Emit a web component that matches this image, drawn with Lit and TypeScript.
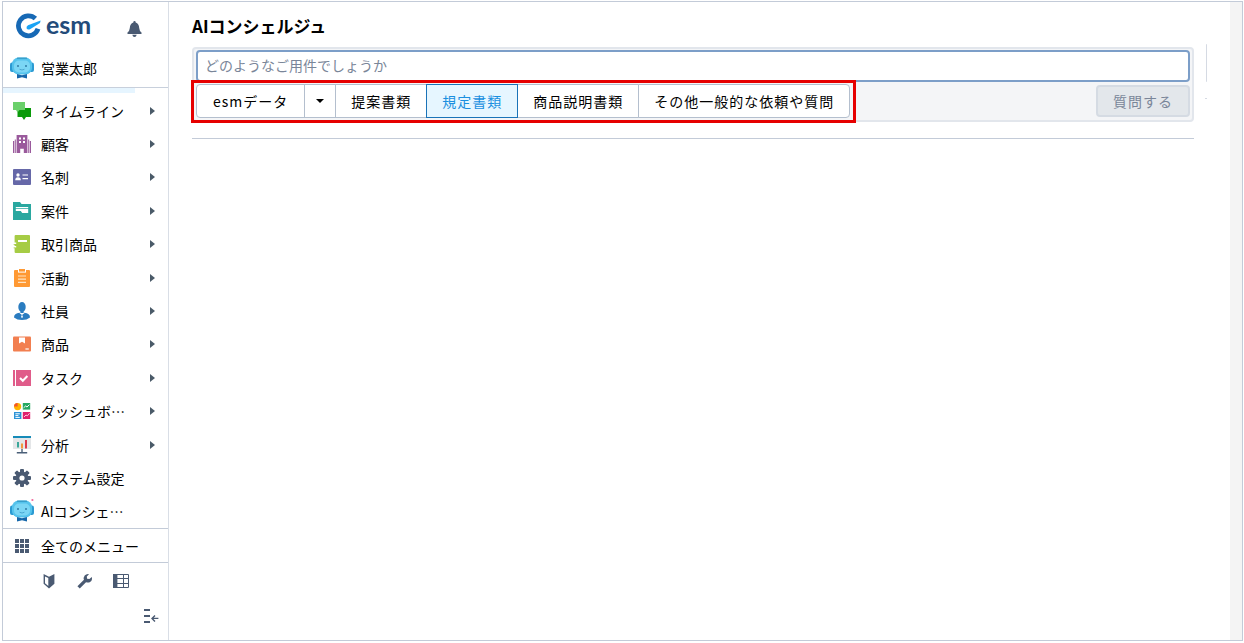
import { LitElement, html, css, svg, TemplateResult } from "lit";
import { customElement, state } from "lit/decorators.js";
import { classMap } from "lit/directives/class-map.js";

const robot = (spark: boolean) => html`
  <svg class="robot" viewBox="0 0 24 24" aria-hidden="true">
    <rect x="0" y="6.500" width="5" height="9.500" rx="2" fill="#2b9ad2" />
    <rect x="19" y="6.500" width="5" height="9.500" rx="2" fill="#2b9ad2" />
    <rect x="2" y="1.500" width="20" height="17" rx="6.500" fill="#55c3ec" />
    <path d="M7 2.200h10" stroke="#3397c4" stroke-width="1.200" />
    <rect x="4" y="4.500" width="16" height="12" rx="5" fill="#7bd6f5" />
    <circle cx="8" cy="10" r="1" fill="#2f7ba6" />
    <circle cx="16" cy="10" r="1" fill="#2f7ba6" />
    <path d="M9.500 13.200q2.500 1.600 5 0" fill="none" stroke="#3f9cc8" stroke-width=".8" />
    <path d="M7 18l5 1.300 5-1.300v4.600l-5-1.300-5 1.300z" fill="#1567ab" />
    ${spark ? svg`<circle cx="22.400" cy="1" r="1.100" fill="#f0679a" />` : ""}
  </svg>`;

const icon = (body: TemplateResult) =>
  html`<svg class="icon" viewBox="0 0 18 18" aria-hidden="true">${body}</svg>`;

const ITEMS: { label: string; art: TemplateResult; more: boolean }[] = [
  {
    label: "タイムライン",
    more: true,
    art: icon(svg`
      <path d="M4.500 6H18v9h-5l-2 3-2-3H4.500z" fill="#0a9a0a" />
      <path d="M0 0h12v8H6.500l-2 2.500-1.500-2.500H0z" fill="#6bd06b" />`),
  },
  {
    label: "顧客",
    more: true,
    art: icon(svg`
      <path d="M3.600 0h10.800v18h-3.600v-4.200H7.200V18H3.600z" fill="#9a5a9c" />
      <path d="M0 6h1.200v12H0zM1.800 4.600h1V18h-1zM15.200 4.600h1V18h-1zM16.800 6H18v12h-1.200z" fill="#9a5a9c" />
      <path d="M6 2.400h2v2H6zM10 2.400h2v2h-2zM6 6h2v2H6zM10 6h2v2h-2z" fill="#fff" />`),
  },
  {
    label: "名刺",
    more: true,
    art: icon(svg`
      <rect x="0" y="1" width="18" height="16" rx="1" fill="#6668a8" />
      <circle cx="5" cy="7" r="1.700" fill="#fff" />
      <path d="M2.200 12.200q0-3 2.800-3t2.800 3z" fill="#fff" />
      <path d="M9.500 6.400H15v1.200H9.500zM9.500 10H15v1.200H9.500z" fill="#fff" />`),
  },
  {
    label: "案件",
    more: true,
    art: icon(svg`
      <path d="M0 0h7l1.500 2H18v16H0z" fill="#2aa8a0" />
      <path d="M2.800 5h12.400v1.200H2.800zM2.800 7h12.400v4h-6l-1.400-2h-5z" fill="#fff" />`),
  },
  {
    label: "取引商品",
    more: true,
    art: icon(svg`
      <rect x="1.600" y="0" width="15.400" height="18" rx="1" fill="#a6cc45" />
      <path d="M5 5h9v2H5zM.6 7.600h2.600v1.400H.6zM.6 11h2.600v1.400H.6z" fill="#fff" />
      <path d="M.6 9h1.600v.8H.6zM.6 12.400h1.600v.8H.6z" fill="#a6cc45" />`),
  },
  {
    label: "活動",
    more: true,
    art: icon(svg`
      <rect x="1" y="1" width="16" height="17" rx="1" fill="#ff9933" />
      <path d="M5 1h8v2.600H5z" fill="#fff" /><path d="M6 0h6v2.600H6z" fill="#ff9933" />
      <path d="M5 6.400h8v1.200H5zM5 9.600h8v1.200H5zM5 12.800h8V14H5z" fill="#ffe3c2" />`),
  },
  {
    label: "社員",
    more: true,
    art: icon(svg`
      <ellipse cx="9" cy="5" rx="3.700" ry="5" fill="#2a7cc0" />
      <path d="M7.400 8h3.200v4H7.400z" fill="#2a7cc0" />
      <path d="M1 15.400q0-4 5.600-4.600L9 12.400l2.400-1.600q5.600.6 5.600 4.600Q14 18 9 18t-8-2.600z" fill="#2a7cc0" />
      <path d="M6.400 11l2.600 2 2.600-2M9 12.600l1 2.400-1 1-1-1z" fill="#fff" />`),
  },
  {
    label: "商品",
    more: true,
    art: icon(svg`
      <rect x="0" y="1.400" width="18" height="15.200" rx="1" fill="#f27f50" />
      <path d="M6 2.400h6v6.200l-3-1.800-3 1.800z" fill="#fff" />
      <path d="M12.400 13.400h3.400v1.200h-3.400z" fill="#fff" />`),
  },
  {
    label: "タスク",
    more: true,
    art: icon(svg`
      <path d="M0 1h2v16H0zM3 1h15v16H3z" fill="#e05c8a" />
      <path d="M7 9l2.800 2.800L14.400 7" fill="none" stroke="#fff" stroke-width="2" />`),
  },
  {
    label: "ダッシュボ…",
    more: true,
    art: icon(svg`
      <circle cx="4.600" cy="4.600" r="3.600" fill="#ffb400" /><path d="M4.600 4.600V1A3.600 3.600 0 0 0 1 4.600z" fill="#f2552c" />
      <path d="M9.800 1h7.400v6.600H9.800z" fill="#27a862" /><path d="M10.600 5.800l2-1.800 1.400 1 2.400-2.400" fill="none" stroke="#fff" />
      <path d="M1 10h7.400v7H1z" fill="#2c93d6" /><path d="M2.400 11.800h4.400M2.400 13.600h3M2.400 15.400h4.400" stroke="#fff" />
      <path d="M9.800 10h7.400v7H9.800z" fill="#e0206e" /><path d="M11 15l2-2 1.400.8 2.200-2.600" fill="none" stroke="#ffc3da" />`),
  },
  {
    label: "分析",
    more: true,
    art: icon(svg`
      <path d="M0 1.600h18V13H0z" fill="#e4e6e8" /><path d="M0 0h18v2H0z" fill="#168bb8" />
      <path d="M4 6h2v5.400H4z" fill="#3aa79a" /><path d="M8 7.600h2v4.800H8z" fill="#f19a3e" /><path d="M12 4h2v8.400h-2z" fill="#dc3b4b" />
      <path d="M8.300 13h1.400v3h4.500v1.400H3.800V16h4.500z" fill="#4a5f78" />`),
  },
  {
    label: "システム設定",
    more: false,
    art: icon(svg`
      <g fill="#4a5a72"><circle cx="9" cy="9" r="6.400" />
        ${[0, 45, 90, 135].map(
          (a) => svg`<rect x="7" y="0" width="4" height="18" rx="1" transform="rotate(${a} 9 9)" />`,
        )}</g>
      <circle cx="9" cy="9" r="2.600" fill="#fff" />`),
  },
  { label: "AIコンシェ…", more: false, art: robot(true) },
];

const CATEGORIES = ["提案書類", "規定書類", "商品説明書類", "その他一般的な依頼や質問"];

@customElement("side-menu")
export class SideMenu extends LitElement {
  static styles = css`
    :host {
      display: flex;
      flex-direction: column;
      width: 165px;
      flex: none;
      border-right: 1px solid #d9dee6;
      color: #000;
    }
    a {
      color: inherit;
      text-decoration: none;
    }
    .brand {
      display: flex;
      align-items: flex-start;
      justify-content: space-between;
      box-sizing: border-box;
      height: 46px;
      padding: 7px 26px 0 13px;
    }
    .logo {
      display: flex;
      align-items: center;
      gap: 4px;
      font: 700 25px/30px Lato, sans-serif;
      color: #234b7a;
    }
    .mark {
      width: 26px;
      height: 26px;
    }
    .word {
      padding-bottom: 4px;
    }
    .plain {
      display: flex;
      border: 0;
      padding: 0;
      background: none;
      cursor: pointer;
    }
    .bell {
      margin-top: 12px;
    }
    .user,
    .row {
      display: flex;
      align-items: center;
      padding: 0 13px 0 6px;
    }
    .user {
      height: 39px;
      border-bottom: 1px solid #c8d0dc;
    }
    .strip {
      height: 5px;
      margin-right: 33px;
      background: #e6f5ff;
    }
    .list {
      display: flex;
      flex-direction: column;
      flex: 1;
      margin: 0;
      padding: 1px 0 0;
      list-style: none;
    }
    .item {
      display: flex;
      flex: 1;
    }
    .row {
      flex: 1;
      min-height: 24px;
    }
    .glyph {
      display: flex;
      justify-content: center;
      width: 26px;
      margin-right: 6px;
    }
    .icon {
      width: 18px;
      height: 18px;
    }
    .robot {
      width: 24px;
      height: 24px;
      overflow: visible;
    }
    .label {
      flex: 1;
      white-space: nowrap;
    }
    .caret {
      width: 5px;
      height: 8px;
    }
    .all {
      flex: none;
      height: 33px;
      border-top: 1px solid #c3cbd8;
      border-bottom: 1px solid #c3cbd8;
    }
    .tools {
      display: flex;
      gap: 20px;
      padding: 10px 0 0 38px;
    }
    .fold {
      display: flex;
      justify-content: flex-end;
      padding: 20px 9px 17px 0;
    }
  `;

  render() {
    return html`
      <div class="brand">
        <a class="logo" href="#">
          <svg class="mark" viewBox="0 0 26 26" aria-hidden="true">
            <path d="M19.400 5.600A10 10 0 1 0 22 15.800" fill="none" stroke="#1769b5" stroke-width="4.800" />
            <path d="M24.600 7.400L24 10 14 16.200Q11.600 17.200 10.600 15.400 10 13.400 12 12.200z" fill="#1aa3f5" />
          </svg>
          <span class="word">esm</span>
        </a>
        <button class="plain bell" aria-label="通知">
          <svg width="15" height="16" viewBox="0 0 15 16">
            <path d="M7.500 0q1.200 0 1.200 1.400Q12 2.400 12.200 7q.2 3 2.300 4.400V13H.5v-1.600Q2.600 10 2.800 7 3 2.400 6.300 1.400 6.300 0 7.500 0zM5.300 13.800h4.400Q9.300 16 7.500 16t-2.200-2.200z" fill="#4a5a72" />
          </svg>
        </button>
      </div>
      <a class="user" href="#"><span class="glyph">${robot(false)}</span><span class="label">営業太郎</span></a>
      <div class="strip"></div>
      <ul class="list">
        ${ITEMS.map(
          (it) => html`<li class="item">
            <a class="row" href="#">
              <span class="glyph">${it.art}</span><span class="label">${it.label}</span>
              ${it.more
                ? html`<svg class="caret" viewBox="0 0 5 8"><path d="M0 0l5 4-5 4z" fill="#4a5a68" /></svg>`
                : ""}
            </a>
          </li>`,
        )}
      </ul>
      <a class="row all" href="#">
        <span class="glyph">
          <svg width="14" height="14" viewBox="0 0 14 14" fill="#4a5a72">
            ${[0, 5, 10].map((y) => [0, 5, 10].map((x) => svg`<rect x=${x} y=${y} width="4" height="4" />`))}
          </svg>
        </span>
        <span class="label">全てのメニュー</span>
      </a>
      <div class="tools">
        <button class="plain" aria-label="ガイド">
          <svg width="16" height="16" viewBox="0 0 16 16">
            <path d="M2.600 1L8 3.800 13.400 1v9.800L8 15.600l-5.400-4.800z" fill="#4a5a72" />
            <path d="M4 3.400L7.300 5v8L4 10.200z" fill="#fff" />
          </svg>
        </button>
        <button class="plain" aria-label="ツール">
          <svg width="16" height="16" viewBox="0 0 16 16">
            <path d="M1.600 14.400L8.600 7.400" stroke="#4a5a72" stroke-width="3.200" />
            <path d="M12 1.200L9.800 3.600l.3 2.200 2.300.3 2.400-2.200q.8 3.200-1.400 4.800-2 1.400-4.200.5L7 7q-.9-2.400.7-4.400Q9.400.7 12 1.200z" fill="#4a5a72" />
          </svg>
        </button>
        <button class="plain" aria-label="表">
          <svg width="16" height="16" viewBox="0 0 16 16">
            <path d="M.5 1.500h15v13H.5zM4 5.500h11.500M4 10.500h11.500M10.500 1.500v13" fill="none" stroke="#4a5a72" stroke-width="1" />
            <path d="M0 1h4.400v14H0z" fill="#4a5a72" />
          </svg>
        </button>
      </div>
      <div class="fold">
        <button class="plain" aria-label="メニューを閉じる">
          <svg width="15" height="14" viewBox="0 0 15 14">
            <path d="M0 1h6M0 7h6M0 13h6" stroke="#4a5a72" stroke-width="1.800" />
            <path d="M14.400 9.400H8.400M11 6.400L8 9.400l3 3" fill="none" stroke="#4a5a72" stroke-width="1.400" />
          </svg>
        </button>
      </div>
    `;
  }
}

@customElement("app-root")
export class AppRoot extends LitElement {
  @state() private selected = 1;

  static styles = css`
    :host {
      display: block;
      box-sizing: border-box;
      min-height: 100vh;
      padding: 1px 1px 2px 2px;
      background: #fff;
      font: 14px/20px "Noto Sans CJK JP", sans-serif;
      color: #000;
    }
    .frame {
      box-sizing: border-box;
      display: flex;
      min-height: calc(100vh - 3px);
      border: 1px solid #c3cbd8;
    }
    .main {
      flex: 1;
      min-width: 0;
      padding: 12px 23px 0;
    }
    .title {
      margin: 0;
      font-size: 17px;
      line-height: 24px;
      font-weight: 700;
    }
    .content {
      display: flex;
      align-items: flex-start;
      gap: 11px;
      margin-top: 6px;
    }
    .query {
      flex: 1;
      min-width: 0;
      padding-top: 3px;
    }
    .side {
      display: flex;
      flex-direction: column;
      gap: 16px;
      width: 2px;
    }
    .edge {
      height: 38px;
      border-right: 1px solid #d5dae3;
      border-radius: 2px;
    }
    .dash {
      height: 1px;
      background: #d5dae3;
    }
    .panel {
      padding: 1px 2px 2px;
      border: 2px solid #e2e6ec;
      border-radius: 4px;
      background: #f4f5f7;
    }
    .ask {
      display: block;
      box-sizing: border-box;
      width: 100%;
      height: 32px;
      padding: 0 7px 2px;
      border: 2px solid #7c9ec8;
      border-radius: 4px;
      background: #fff;
      font: inherit;
      outline: 0;
    }
    .ask::placeholder {
      color: #7a8699;
      opacity: 1;
    }
    .actions {
      display: flex;
      align-items: center;
      justify-content: space-between;
      padding-top: 2px;
    }
    .scope {
      position: relative;
      display: flex;
    }
    .mark {
      position: absolute;
      inset: -4px -6px -5px -5px;
      border: 3px solid #e60000;
      pointer-events: none;
    }
    .seg,
    .send {
      box-sizing: border-box;
      font: inherit;
      letter-spacing: 1px;
      white-space: nowrap;
      cursor: pointer;
    }
    .seg {
      height: 34px;
      padding: 0 15px;
      margin-left: -1px;
      border: 1px solid #b4bfce;
      background: #fff;
      color: #000;
    }
    .first {
      margin-left: 0;
      padding: 0 16px;
      border-radius: 4px 0 0 4px;
    }
    .drop {
      display: flex;
      align-items: center;
      padding: 0 11px;
    }
    .last {
      border-radius: 0 4px 4px 0;
    }
    .on {
      z-index: 1;
      border-color: #1a73b8;
      background: #e6f6ff;
      color: #1a8fe0;
    }
    .send {
      height: 32px;
      padding: 0 15px;
      border: 2px solid #d5dbe3;
      border-radius: 4px;
      background: #e3e7eb;
      color: #7a8699;
    }
    .rule {
      margin: 16px 0 0;
      border: 0;
      border-top: 1px solid #c3cbd8;
    }
    .track {
      flex: none;
      width: 12px;
      background: #f4f4f4;
    }
  `;

  render() {
    return html`
      <div class="frame" lang="ja">
        <side-menu></side-menu>
        <main class="main">
          <h1 class="title">AIコンシェルジュ</h1>
          <div class="content">
            <div class="query">
              <form class="panel" @submit=${(e: Event) => e.preventDefault()}>
                <input class="ask" type="text" aria-label="質問" placeholder="どのようなご用件でしょうか" />
                <div class="actions">
                  <div class="scope">
                    <button type="button" class="seg first">esmデータ</button>
                    <button type="button" class="seg drop" aria-label="データの種類">
                      <svg width="8" height="4" viewBox="0 0 8 4"><path d="M0 0h8L4 4z" /></svg>
                    </button>
                    ${CATEGORIES.map(
                      (name, i) => html`<button
                        type="button"
                        class=${classMap({ seg: true, on: i === this.selected, last: i === CATEGORIES.length - 1 })}
                        aria-pressed=${i === this.selected}
                        @click=${() => (this.selected = i)}
                      >${name}</button>`,
                    )}
                    <span class="mark"></span>
                  </div>
                  <button class="send" disabled>質問する</button>
                </div>
              </form>
              <hr class="rule" />
            </div>
            <div class="side">
              <div class="edge"></div>
              <div class="dash"></div>
            </div>
          </div>
        </main>
        <div class="track"></div>
      </div>
    `;
  }
}
